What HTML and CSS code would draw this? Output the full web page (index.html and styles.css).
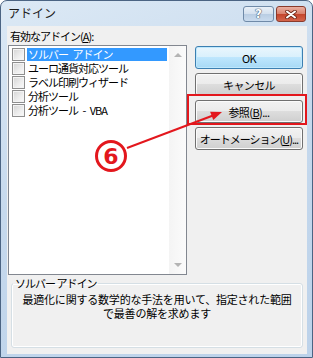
FILE: index.html
```html
<!DOCTYPE html>
<html lang="ja">
<head>
<meta charset="UTF-8" />
<title>アドイン</title>
<link rel="stylesheet" href="styles.css">
</head>
<body>
<div class="window" role="dialog" aria-label="アドイン">
  <div class="titlebar">
    <span class="title">アドイン</span>
    <div class="caption-buttons">
      <span class="cap help">?</span>
      <span class="cap close">
        <svg width="12" height="9" viewBox="0 0 12 9">
          <path d="M2 1.5 L10 7.5 M10 1.5 L2 7.5" stroke="#6b2414" stroke-width="3.6" stroke-linecap="round" />
          <path d="M2 1.5 L10 7.5 M10 1.5 L2 7.5" stroke="#fff" stroke-width="2" stroke-linecap="round" />
        </svg>
      </span>
    </div>
  </div>

  <div class="client">
    <div class="top">
      <div class="left">
        <div class="label">有効なアドイン(<u>A</u>):</div>
        <div class="listbox">
          <ul class="items">
            <li class="item selected"><span class="check"></span><span class="name">ソルバー アドイン</span></li>
            <li class="item"><span class="check"></span><span class="name">ユーロ通貨対応ツール</span></li>
            <li class="item"><span class="check"></span><span class="name">ラベル印刷ウィザード</span></li>
            <li class="item"><span class="check"></span><span class="name">分析ツール</span></li>
            <li class="item"><span class="check"></span><span class="name">分析ツール - VBA</span></li>
          </ul>
          <div class="scrollbar">
            <span class="arrow up"></span>
            <span class="arrow down"></span>
          </div>
        </div>
      </div>
      <div class="buttons">
        <button class="btn default">OK</button>
        <button class="btn">キャンセル</button>
        <button class="btn">参照(<u>B</u>)...</button>
        <button class="btn tight">オートメーション(<u>U</u>)...</button>
      </div>
    </div>

    <fieldset class="group">
      <legend>ソルバー アドイン</legend>
      <p class="desc">最適化に関する数学的な手法を用いて、指定された範囲<br>で最善の解を求めます</p>
    </fieldset>
  </div>

  <!-- red annotation marks -->
  <svg class="marks" width="313" height="358" viewBox="0 0 313 358">
    <rect x="188" y="95" width="118" height="29" fill="none" stroke="#e3171d" stroke-width="2" />
    <line x1="127" y1="148" x2="213" y2="115.5" stroke="#e3171d" stroke-width="2" />
    <polygon points="222,112 213.3,120.1 210.1,111.7" fill="#e3171d" />
    <circle cx="111" cy="156" r="14.5" fill="none" stroke="#e3171d" stroke-width="3" />
    <text x="111" y="164" text-anchor="middle" class="num">6</text>
  </svg>
</div>
</body>
</html>
```

FILE: styles.css
```css
/* Base */
*, *::before, *::after {
  box-sizing: border-box;
}

body {
  margin: 0;
  font-family: "Noto Sans CJK JP", "Noto Sans", sans-serif;
  font-size: 11px;
  color: #000;
  background: #fff;
}

/* Window frame */
.window {
  position: relative;
  width: 313px;
  height: 358px;
  border: 1px solid #4b6483;
  border-radius: 7px 7px 0 0;
  background: linear-gradient(160deg, #dce9f5 0%, #c6d9ed 45%, #bcd2ea 100%);
  display: flex;
  flex-direction: column;
}

.titlebar {
  height: 25px;
  display: flex;
  justify-content: space-between;
  align-items: flex-start;
}

.title {
  font-size: 12px;
  line-height: 24px;
  padding-left: 7px;
  color: #1c1c1c;
}

.caption-buttons {
  display: flex;
  gap: 2px;
  margin: 5px 6px 0 0;
}

.cap {
  height: 16px;
  border-radius: 3px;
  display: flex;
  align-items: center;
  justify-content: center;
}

.cap.help {
  width: 31px;
  border: 1px solid #6f8aa8;
  background: linear-gradient(#e9f0f8 0%, #d3e0ee 50%, #b9cde3 51%, #c9dbee 100%);
  color: #fff;
  font: bold 12px "DejaVu Sans", sans-serif;
  text-shadow: 0 0 1px #40566f, 0 0 1px #40566f, 0 0 1px #40566f;
}

.cap.close {
  width: 30px;
  border: 1px solid #8a3b2c;
  background: linear-gradient(#eab0a2 0%, #d9826e 48%, #c4452c 52%, #d4654c 100%);
}

/* Client area */
.client {
  flex: 1;
  margin: 0 5px 3px 6px;
  background: #f0f0f0;
  padding: 4px 0 0 1px;
  display: flex;
  flex-direction: column;
}

.top {
  display: flex;
}

.left {
  width: 179px;
}

.label {
  height: 15px;
  line-height: 13px;
  padding-left: 2px;
  letter-spacing: -1px;
}

/* List box */
.listbox {
  height: 230px;
  border: 1px solid #828790;
  background: #fff;
  display: flex;
}

.items {
  flex: 1;
  list-style: none;
  margin: 0;
  padding: 1px 0 0;
}

.item {
  height: 14px;
  display: flex;
  align-items: center;
  padding-left: 3px;
  letter-spacing: -1px;
  word-spacing: 3px;
  white-space: pre;
}

.check {
  width: 13px;
  height: 13px;
  flex: 0 0 auto;
  border: 1px solid #8f8f8f;
  background: linear-gradient(135deg, #d4d4d4 0%, #eeeeee 60%, #fafafa 100%);
  box-shadow: inset 0 0 0 1px #f4f4f4;
}

.name {
  flex: 1;
  height: 13px;
  line-height: 13px;
  margin: 0 2px 0 2px;
  padding-left: 1px;
}

.item.selected .name {
  background: #3399ff;
  color: #fff;
}

.scrollbar {
  width: 17px;
  background: linear-gradient(to right, #f4f4f4, #fbfbfb);
  display: flex;
  flex-direction: column;
  justify-content: space-between;
  align-items: center;
  padding: 7px 0;
}

.arrow {
  width: 0;
  height: 0;
  border-left: 4px solid transparent;
  border-right: 4px solid transparent;
}

.arrow.up {
  border-bottom: 4px solid #b4b4b4;
}

.arrow.down {
  border-top: 4px solid #b4b4b4;
}

/* Buttons */
.buttons {
  margin-left: 8px;
  padding-top: 16px;
  display: flex;
  flex-direction: column;
  gap: 4px;
}

.btn {
  width: 108px;
  height: 23px;
  padding: 0;
  font-family: inherit;
  font-size: 11px;
  letter-spacing: -0.6px;
  color: #000;
  border: 1px solid #707070;
  border-radius: 3px;
  background: linear-gradient(#f2f2f2 0%, #ebebeb 49%, #dddddd 50%, #cfcfcf 100%);
  box-shadow: inset 0 0 0 1px #fbfbfb;
}

.btn.default {
  border-color: #3c7fb1;
  background: linear-gradient(#eaf6fd 0%, #d9f0fc 49%, #bee6fd 50%, #a7d9f5 100%);
  box-shadow: inset 0 0 0 1px #bfe8fc;
}

.btn.tight {
  letter-spacing: -1px;
}

/* Description group */
.group {
  height: 71px;
  margin: 2px 4px 0 3px;
  padding: 0;
  border: 1px solid #d5dfe5;
  border-radius: 3px;
  box-shadow: inset 0 0 0 1px #fff;
}

.group legend {
  margin-left: 1px;
  padding: 0 2px;
  line-height: 12px;
  letter-spacing: -1px;
}

.desc {
  margin: 3px 0 0;
  text-align: center;
  line-height: 14px;
  letter-spacing: -0.2px;
  white-space: nowrap;
}

/* Annotation overlay */
.marks {
  position: absolute;
  top: -1px;
  left: -1px;
  pointer-events: none;
}

.marks .num {
  font: bold 22px "DejaVu Sans", sans-serif;
  fill: #e3171d;
}
```
